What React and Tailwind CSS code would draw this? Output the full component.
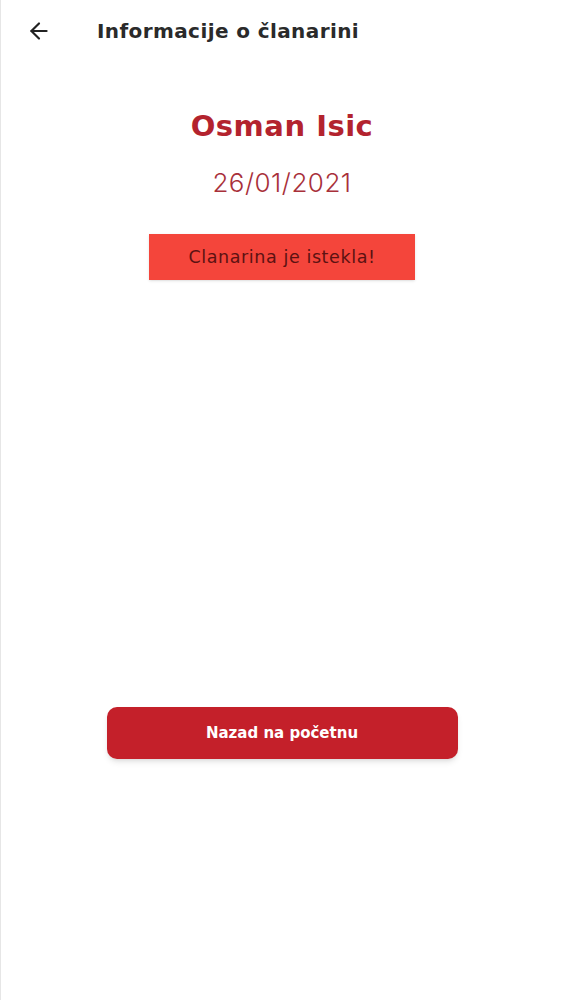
import { ArrowLeft } from "lucide-react";

const Clanarina = () => {
  return (
    <div className="min-h-screen bg-white border-l border-[#e6e6e6] font-['DejaVu_Sans',sans-serif]">
      {/* Header */}
      <header className="flex items-center h-[62px] pl-[25px]">
        <ArrowLeft className="w-[26px] h-[26px] text-[#222]" strokeWidth={2} />
        <h1 className="ml-[45px] text-[20px] font-bold text-[#2a2a2a] tracking-[0.4px]">
          Informacije o članarini
        </h1>
      </header>

      <section className="flex flex-col items-center pt-[45px]">
        <h2 className="text-[29px] font-bold text-[#b3232e] leading-[38px] tracking-[0.5px]">Osman Isic</h2>
        <p className="mt-[20px] text-[26px] font-light text-[#a8303a] leading-[36px] font-['Inter',sans-serif] tracking-[0.5px]">
          26/01/2021
        </p>
        <div className="mt-[33px] w-[266px] h-[46px] flex items-center justify-center bg-[#f4453b] shadow-sm">
          <span className="text-[17.5px] text-[#5c1212] font-normal tracking-[0.6px]">Clanarina je istekla!</span>
        </div>
      </section>

      <div className="flex justify-center mt-[427px]">
        <button className="w-[351px] h-[52px] rounded-[10px] bg-[#c4202a] text-white text-[15px] font-bold shadow-md">
          Nazad na početnu
        </button>
      </div>
    </div>
  );
};

export default Clanarina;
